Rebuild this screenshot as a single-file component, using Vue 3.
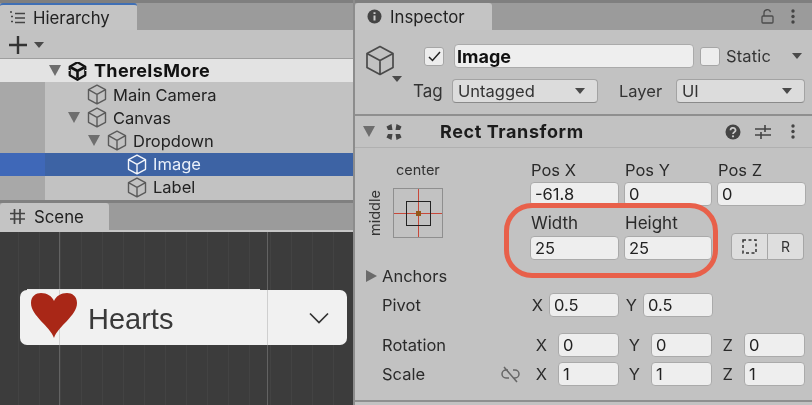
<script setup>
const tree = [
  { name: 'Main Camera', indent: 87, arrow: false },
  { name: 'Canvas', indent: 87, arrow: true },
  { name: 'Dropdown', indent: 107, arrow: true },
  { name: 'Image', indent: 127, arrow: false, selected: true },
  { name: 'Label', indent: 127, arrow: false },
]
const rotation = [['X', '0'], ['Y', '0'], ['Z', '0']]
const scale = [['X', '1'], ['Y', '1'], ['Z', '1']]
</script>

<template>
  <div class="app">
    <section class="left">
      <div class="tabbar">
        <div class="tab hier-tab">
          <svg class="tab-ico" width="16" height="14" viewBox="0 0 16 14"><path d="M5 2.500h10M5 7h10M5 11.500h10" stroke="#444" stroke-width="1.500" fill="none"/><path d="M0 1h2M1 5.500h2M1 10.500h2" stroke="#444" stroke-width="1.500"/></svg>
          <span>Hierarchy</span>
        </div>
      </div>
      <div class="toolbar">
        <svg width="18" height="18" viewBox="0 0 18 18"><path d="M9 0v18M0 9h18" stroke="#333" stroke-width="2.400"/></svg>
        <i class="tri small"></i>
      </div>
      <div class="root-row">
        <i class="tri big"></i>
        <svg class="unity" width="19" height="20" viewBox="0 0 19 20"><path d="M9.500 1.200 17.300 5.700v8.600L9.500 18.800l-7.800-4.500V5.700z" fill="#d8d8d8" stroke="#111" stroke-width="2.200" stroke-linejoin="round"/><path d="M3 6.500 9.500 10 16 6.500M9.500 10v7" fill="none" stroke="#111" stroke-width="2.600"/><path d="M0 9.500h2M17 9.500h2M7.500 0.500h4" stroke="#e3e3e3" stroke-width="1.200"/></svg>
        <b>ThereIsMore</b>
      </div>
      <div class="tree">
        <div v-for="n in tree" :key="n.name" class="node" :class="{ sel: n.selected }" :style="{ paddingLeft: n.indent + 'px' }">
          <i v-if="n.arrow" class="tri big arrow"></i>
          <svg class="cube" width="20" height="21" viewBox="0 0 20 21"><path d="M10 1.200 18.500 5.700v9.600L10 19.800l-8.500-4.500V5.700zM1.500 5.700 10 10.300l8.500-4.600M10 10.300v9.500" fill="none" stroke-width="1.400" stroke-linejoin="round"/></svg>
          <span>{{ n.name }}</span>
        </div>
      </div>
      <div class="tabbar scene-bar">
        <div class="tab scene-tab">
          <svg class="tab-ico" width="15" height="15" viewBox="0 0 15 15"><path d="M4.500 0v15M10 0v15M0 4.500h15M0 10h15" stroke="#444" stroke-width="1.700"/></svg>
          <span>Scene</span>
        </div>
      </div>
      <div class="scene">
        <div class="dd">
          <svg class="heart" width="48" height="46" viewBox="0 0 48 46"><path d="M24 46C20 34 1 24 1 11 1 4 6 1 11 1c6 0 11 3 13 8 2-5 7-8 13-8 5 0 10 3 10 10C47 24 28 34 24 46z" fill="#a92717"/></svg>
          <span class="dd-text">Hearts</span>
          <svg class="chev" width="20" height="12" viewBox="0 0 20 12"><path d="M1 1.500 10 10.500 19 1.500" fill="none" stroke="#333" stroke-width="1.700"/></svg>
        </div>
      </div>
    </section>

    <section class="right">
      <div class="tabbar insp-bar">
        <div class="tab insp-tab">
          <svg class="tab-ico" width="15" height="15" viewBox="0 0 15 15"><circle cx="7.500" cy="7.500" r="7" fill="#444"/><path d="M7.500 6.500v5M7.500 3.200v1.800" stroke="#ccc" stroke-width="2"/></svg>
          <span>Inspector</span>
        </div>
        <div class="tab-actions">
          <svg width="13" height="15" viewBox="0 0 13 15"><rect x="1" y="7" width="11" height="7" rx="1" fill="none" stroke="#4c4c4c" stroke-width="1.300"/><path d="M3 7V4a3.300 3.300 0 0 1 6.500-.8" fill="none" stroke="#4c4c4c" stroke-width="1.300"/></svg>
          <svg width="4" height="15" viewBox="0 0 4 15"><g fill="#444"><circle cx="2" cy="2" r="1.700"/><circle cx="2" cy="7.500" r="1.700"/><circle cx="2" cy="13" r="1.700"/></g></svg>
        </div>
      </div>

      <div class="header">
        <div class="big-icon">
          <svg width="30" height="31" viewBox="0 0 30 31"><path d="M15 1.500 28 8.500v14L15 29.500 2 22.500v-14zM2 8.500l13 7 13-7M15 15.500v14" fill="none" stroke="#4a4a4a" stroke-width="1.700" stroke-linejoin="round"/></svg>
          <i class="tri small cube-tri"></i>
        </div>
        <div class="header-main">
          <div class="h-row">
            <span class="check"><svg width="13" height="11" viewBox="0 0 13 11"><path d="M1 6 4.500 9.500 12 1" fill="none" stroke="#222" stroke-width="1.500"/></svg></span>
            <div class="field name-field"><b>Image</b></div>
            <span class="check static-check"></span>
            <span class="static">Static</span>
            <i class="tri small static-tri"></i>
          </div>
          <div class="h-row tag-row">
            <span class="tag-label">Tag</span>
            <div class="select tag-select"><span>Untagged</span><i class="tri small"></i></div>
            <span class="layer-label">Layer</span>
            <div class="select layer-select"><span>UI</span><i class="tri small"></i></div>
          </div>
        </div>
      </div>

      <div class="comp-head">
        <i class="tri big comp-tri"></i>
        <svg class="rt-ico" width="18" height="18" viewBox="0 0 18 18"><g fill="#444"><path d="M1.500 3.500 6.500 1 7.500 7 3 7z"/><path d="M16.500 3.500 11.500 1 10.500 7 15 7z"/><path d="M1.500 14.500 6.500 17 7.500 11 3 11z"/><path d="M16.500 14.500 11.500 17 10.500 11 15 11z"/></g></svg>
        <b class="comp-title">Rect Transform</b>
        <svg class="help" width="16" height="16" viewBox="0 0 16 16"><circle cx="8" cy="8" r="7.500" fill="#444"/><path d="M5.500 6.200a2.500 2.300 0 1 1 3.700 2C8.300 8.800 8 9 8 10" fill="none" stroke="#ccc" stroke-width="1.700"/><circle cx="8" cy="12.300" r="1.100" fill="#ccc"/></svg>
        <svg class="sliders" width="16" height="14" viewBox="0 0 16 14"><path d="M0 4h16M0 10h16M10 0v7M6 7v7" stroke="#444" stroke-width="1.600"/></svg>
        <svg class="dots" width="4" height="15" viewBox="0 0 4 15"><g fill="#444"><circle cx="2" cy="2" r="1.700"/><circle cx="2" cy="7.500" r="1.700"/><circle cx="2" cy="13" r="1.700"/></g></svg>
      </div>

      <div class="body">
        <div class="top-grid">
          <div class="anchor-col">
            <span class="center-label">center</span>
            <div class="anchor-row">
              <span class="middle-label">middle</span>
              <div class="anchor-box">
                <i class="cross-h"></i><i class="cross-v"></i><i class="inner"></i><i class="dot"></i>
              </div>
            </div>
          </div>
          <div class="pos-grid">
            <label>Pos X</label><label>Pos Y</label><label>Pos Z</label>
            <div class="field">-61.8</div><div class="field">0</div><div class="field">0</div>
            <label class="l2">Width</label><label class="l2">Height</label><span></span>
            <div class="field">25</div><div class="field">25</div>
            <div class="btns">
              <span class="btn"><svg width="15" height="15" viewBox="0 0 15 15"><rect x="1" y="1" width="13" height="13" fill="none" stroke="#333" stroke-width="1.500" stroke-dasharray="3 2.500"/></svg></span>
              <span class="btn">R</span>
            </div>
          </div>
        </div>

        <div class="anchors"><i class="tri-r"></i><span>Anchors</span></div>

        <div class="pivot">
          <span class="row-label">Pivot</span>
          <span class="ax">X</span><div class="field">0.5</div>
          <span class="ax">Y</span><div class="field">0.5</div>
        </div>

        <div class="vec rot">
          <span class="row-label">Rotation</span>
          <template v-for="c in rotation" :key="c[0]">
            <span class="ax">{{ c[0] }}</span><div class="field">{{ c[1] }}</div>
          </template>
        </div>
        <div class="vec">
          <span class="row-label">Scale
            <svg class="link" width="19" height="17" viewBox="0 0 19 17"><path d="M7 4H5a4 4 0 0 0 0 8h3M12 4h2a4 4 0 0 1 0 8h-2M3 1l13 15" fill="none" stroke="#666" stroke-width="1.500"/></svg>
          </span>
          <template v-for="c in scale" :key="c[0]">
            <span class="ax">{{ c[0] }}</span><div class="field">{{ c[1] }}</div>
          </template>
        </div>
      </div>
      <div class="bottom-line"></div>

      <div class="oval"></div>
    </section>
  </div>
</template>

<style>
html, body { margin: 0; padding: 0; background: #8a8a8a; }
</style>

<style scoped>
* { box-sizing: border-box; }
.app {
  width: 812px; height: 405px; overflow: hidden; display: flex;
  background: #8c8c8c; color: #222; font-family: Inter, "Liberation Sans", sans-serif;
  font-size: 16.500px; filter: blur(0.35px);
}
i { display: block; font-style: normal; flex: none; }
.left { width: 353px; flex: none; display: flex; flex-direction: column; background: #c2c2c2; }
.right { position: relative; width: 457px; margin-left: 2px; flex: none; display: flex; flex-direction: column; background: #c2c2c2; }

.tabbar { height: 30px; display: flex; background: #9b9b9b; border-top: 3px solid #7f7f7f; flex: none; }
.tab { height: 27px; background: #c4c4c4; display: flex; align-items: center; border-radius: 3px 3px 0 0; font-size: 16.800px; }
.hier-tab { width: 137px; border-top: 2px solid #3f6fb5; padding-left: 10px; gap: 7px; }
.tab-ico { flex: none; }
.toolbar { height: 29px; display: flex; align-items: center; gap: 7px; padding: 1px 0 0 9px; flex: none; border-bottom: 1px solid #9e9e9e; }
.tri { width: 0; height: 0; border-style: solid; border-color: #666 transparent transparent; }
.tri.small { border-width: 6px 5px 0; border-color: #4a4a4a transparent transparent; }
.tri.big { border-width: 11px 6px 0; border-color: #6e6e6e transparent transparent; }

.root-row { height: 23px; background: #e3e3e3; display: flex; align-items: center; padding-left: 49px; flex: none; color: #111; }
.root-row .unity { margin-left: 7px; margin-right: 7px; flex: none; }
.root-row b { font-weight: 700; font-size: 18px; letter-spacing: .36px; }
.tree { flex: none; height: 118px; padding-top: 1px; background: linear-gradient(to right, #a8a8a8 45px, #c2c2c2 45px); }
.node { height: 23.200px; display: flex; align-items: center; position: relative; gap: 6px; }
.node .cube { stroke: #5a5a5a; flex: none; }
.node .arrow { position: absolute; margin-left: -19px; }
.node.sel { background: linear-gradient(to right, #3f68b8 45px, #3d63a4 45px); color: #eaf0fa; }
.node.sel .cube { stroke: #f4f6fb; }

.scene-bar { height: 30px; border-top: 3px solid #808080; }
.scene-tab { width: 109px; padding-left: 10px; gap: 9px; }
.scene {
  flex: 1; border-top: 2px solid #c6c6c6; padding: 58px 6px 0 20px;
  background-color: #3c3c3c;
  background-image:
    linear-gradient(to right, transparent 59px, #636363 59px, #636363 60px, transparent 60px, transparent 267px, #636363 267px, #636363 268px, transparent 268px),
    linear-gradient(to right, #434343 1px, transparent 1px);
  background-size: 100% 100%, 21px 100%;
  background-position: 0 0, 18px 0;
}
.dd {
  height: 55px; background: #f1f1f1; border-radius: 7px; display: flex; align-items: center; position: relative;
  padding-left: 10px; color: #3a3a3a;
  background-image: linear-gradient(to right, transparent 39.500px, #d2d2d2 39.500px, #d2d2d2 40.500px, transparent 40.500px, transparent 247px, #cfcfcf 247px, #cfcfcf 248px, transparent 248px);
}
.dd::before { content: ""; position: absolute; left: 7px; top: -1px; width: 233px; height: 1px; background: #e8e8e8; }
.heart { flex: none; margin-top: -6px; }
.dd-text { font-family: "Liberation Sans", sans-serif; font-size: 29px; margin: 3px 0 0 10px; }
.chev { position: absolute; right: 18px; top: 22px; }

.insp-tab { width: 137px; padding-left: 12px; gap: 8px; }
.tab-actions { margin-left: auto; display: flex; align-items: center; gap: 17px; padding-right: 17px; height: 27px; }

.header { height: 86px; padding: 14px 7px 0 10px; display: flex; border-bottom: 2px solid #8f8f8f; flex: none; }
.big-icon { width: 48px; flex: none; position: relative; padding-top: 1px; }
.cube-tri { position: absolute; left: 27px; top: 32px; }
.header-main { flex: 1; }
.h-row { display: flex; align-items: center; height: 24px; }
.check { width: 20px; height: 19px; border-radius: 3px; background: #ededed; border: 1px solid #a6a6a6; margin-left: 11px; display: flex; align-items: center; justify-content: center; flex: none; }
.field { height: 24px; background: #eeeeee; border: 1px solid #aaaaaa; border-radius: 4px; padding: 0 0 0 4px; display: flex; align-items: center; color: #222; font-size: 16.500px; }
.name-field { width: 240px; margin-left: 10px; font-size: 18px; color: #111; padding-left: 2px; }
.static-check { margin-left: 6px; }
.static { margin-left: 6px; color: #333; letter-spacing: .15px; }
.static-tri { margin-left: 21px; }
.tag-row { margin-top: 11px; }
.tag-label { width: 39px; color: #333; flex: none; font-size: 17px; }
.select { height: 24px; background: #dcdcdc; border: 1px solid #a3a3a3; border-bottom-color: #8a8a8a; border-radius: 4px; display: flex; align-items: center; justify-content: space-between; padding: 0 12px 0 5px; color: #333; flex: none; }
.tag-select { width: 146px; }
.layer-label { margin-left: 21px; width: 57px; color: #333; flex: none; }
.layer-select { width: 129px; }

.comp-head { height: 32px; display: flex; align-items: center; padding-left: 8px; flex: none; border-bottom: 1px solid #b0b0b0; position: relative; }
.comp-tri { border-width: 12px 6.500px 0; }
.rt-ico { margin-left: 10px; }
.comp-title { margin-left: 37px; font-size: 18px; font-weight: 700; letter-spacing: .6px; color: #1c1c1c; }
.help { margin-left: auto; }
.sliders { margin-left: 14px; }
.dots { margin-left: 20px; margin-right: 17px; }

.body { flex: 1; padding: 0 7px 0 0; font-size: 16.500px; color: #2a2a2a; }
.top-grid { display: flex; height: 118px; }
.anchor-col { width: 175px; flex: none; position: relative; padding: 13px 0 0 41px; }
.center-label { font-size: 14.500px; color: #333; display: block; line-height: 18px; }
.anchor-row { display: flex; }
.middle-label { position: absolute; left: -3px; top: 56px; font-size: 14.500px; color: #333; transform: rotate(-90deg); transform-origin: center; line-height: 18px; }
.anchor-box { margin: 9px 0 0 -3px; width: 50px; height: 50px; background: #c2c2c2; border: 1px solid #8f8f8f; position: relative; flex: none; }
.cross-h { position: absolute; left: 0; right: 0; top: 24px; height: 1px; background: #c8483a; }
.cross-v { position: absolute; top: 0; bottom: 0; left: 24px; width: 1px; background: #c8483a; }
.inner { position: absolute; left: 12px; top: 12px; width: 25px; height: 25px; border: 1px solid #222; }
.dot { position: absolute; left: 22px; top: 22px; width: 5px; height: 5px; background: #94591b; }
.pos-grid { display: grid; grid-template-columns: 89px 88px 89px; column-gap: 5px; grid-template-rows: 34px 24px 30px 24px; align-items: end; flex: none; width: 275px; }
.pos-grid label { line-height: 21px; align-self: end; padding: 0 0 1px 1px; color: #2a2a2a; }
.pos-grid .l2 { padding-bottom: 2px; font-size: 17px; }
.btns { display: flex; width: 73px; height: 27px; margin-left: 14px; margin-bottom: 0; }
.btn { flex: 1; background: #dedede; border: 1px solid #a6a6a6; display: flex; align-items: center; justify-content: center; font-size: 14px; color: #333; }
.btn:first-child { border-radius: 4px 0 0 4px; }
.btn:last-child { border-radius: 0 4px 4px 0; border-left: 0; }

.anchors { height: 24px; display: flex; align-items: center; padding-left: 11px; margin-top: -2px; }
.tri-r { width: 0; height: 0; border-style: solid; border-width: 6px 0 6px 11px; border-color: transparent transparent transparent #6a6a6a; margin-right: 5px; }
.pivot { display: grid; grid-template-columns: 149px 18px 70px 24px 70px; height: 24px; align-items: center; padding-left: 27px; margin-top: 5px; }
.pivot .ax:nth-of-type(4) { padding-left: 0; }
.vec { display: grid; grid-template-columns: 149px 27px 61px 32px 61px 32px 61px; height: 24px; align-items: center; padding-left: 27px; margin-top: 5px; }
.rot { margin-top: 16px; }
.ax { color: #2a2a2a; }
.pivot .ax { text-align: right; padding-right: 6px; }
.vec .ax { text-align: right; padding-right: 11px; }
.row-label { position: relative; color: #2a2a2a; }
.link { position: absolute; left: 119px; top: 2px; }
.bottom-line { height: 2px; background: #8f8f8f; margin-bottom: 3px; flex: none; }
.oval { position: absolute; left: 149px; top: 203px; width: 214px; height: 75px; border: 5px solid #e8604a; border-radius: 28px; }
</style>
